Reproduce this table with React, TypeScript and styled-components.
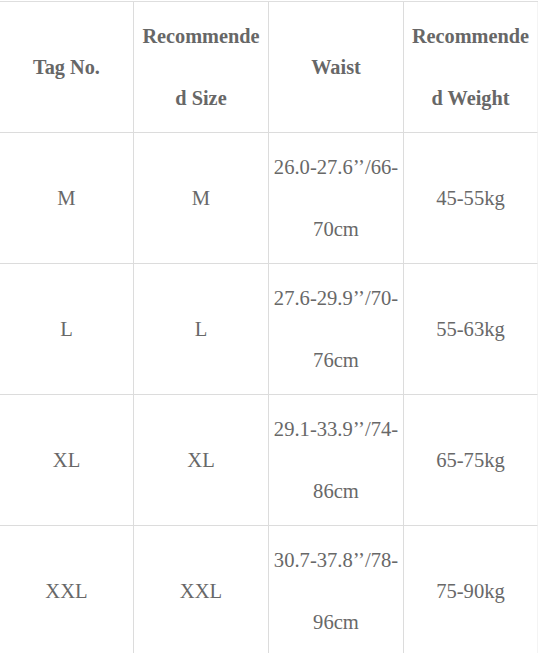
import React from "react";
import styled, { createGlobalStyle } from "styled-components";

const Global = createGlobalStyle`
  html, body { margin: 0; padding: 0; background: #fff; }
  body { font-family: "Liberation Serif", "Times New Roman", serif; }
`;

const Page = styled.div`
  padding-top: 1px;
  width: 538px;
`;

const Grid = styled.div`
  display: grid;
  grid-template-columns: 134px 135px 135px 134px;
  grid-auto-rows: 131px;
  border-top: 1px solid #dedede;
`;

const Cell = styled.div<{ $head?: boolean; $last?: boolean; $bottom?: boolean }>`
  box-sizing: border-box;
  display: flex;
  align-items: center;
  justify-content: center;
  text-align: center;
  padding: 0 3px;
  border-right: 1px solid ${(p) => (p.$last ? "#f4f4f4" : "#dcdcdc")};
  border-bottom: 1px solid ${(p) => (p.$bottom ? "transparent" : "#dcdcdc")};
  font-size: ${(p) => (p.$head ? "20.3px" : "20.6px")};
  line-height: 62px;
  font-weight: ${(p) => (p.$head ? 700 : 400)};
  color: ${(p) => (p.$head ? "#676767" : "#686868")};
  white-space: nowrap;
`;

const Text = styled.span`
  display: block;
`;

const head: React.ReactNode[] = [
  "Tag No.",
  <>Recommende<br />d Size</>,
  "Waist",
  <>Recommende<br />d Weight</>,
];

const rows: React.ReactNode[][] = [
  ["M", "M", <>26.0-27.6’’/66-<br />70cm</>, "45-55kg"],
  ["L", "L", <>27.6-29.9’’/70-<br />76cm</>, "55-63kg"],
  ["XL", "XL", <>29.1-33.9’’/74-<br />86cm</>, "65-75kg"],
  ["XXL", "XXL", <>30.7-37.8’’/78-<br />96cm</>, "75-90kg"],
];

export default function App() {
  return (
    <Page>
      <Global />
      <Grid>
        {head.map((h, i) => (
          <Cell key={"h" + i} $head $last={i === 3}>
            <Text>{h}</Text>
          </Cell>
        ))}
        {rows.map((r, ri) =>
          r.map((c, ci) => (
            <Cell key={ri + "-" + ci} $last={ci === 3} $bottom={ri === rows.length - 1}>
              <Text>{c}</Text>
            </Cell>
          ))
        )}
      </Grid>
    </Page>
  );
}
